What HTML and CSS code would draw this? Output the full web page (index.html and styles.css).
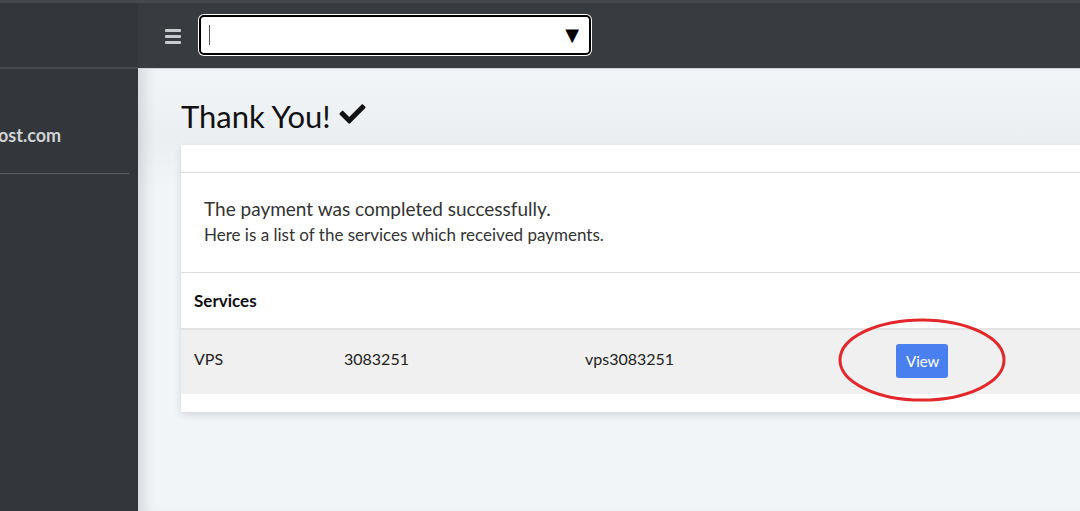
FILE: index.html
```html
<!DOCTYPE html>
<html lang="en">
<head>
  <meta charset="UTF-8" />
  <title>Thank You</title>
  <link rel="stylesheet" href="styles.css">
</head>
<body>
  <div class="layout">
    <aside class="sidebar">
      <div class="brand"></div>
      <div class="account">ost.com</div>
      <hr class="side-rule">
    </aside>

    <div class="page">
      <header class="topbar">
        <span class="burger"><i></i><i></i><i></i></span>
        <div class="picker">
          <span class="caret"></span>
          <span class="arrow">&#9660;</span>
        </div>
      </header>

      <main class="content">
        <h1 class="title">Thank You! <svg class="check" viewBox="0 0 512 512" width="31" height="26"><path d="M173.9 439.4l-166.4-166.4c-10-10-10-26.2 0-36.2l36.2-36.2c10-10 26.2-10 36.2 0L192 312.7 432.1 72.6c10-10 26.2-10 36.2 0l36.2 36.2c10 10 10 26.2 0 36.2l-294.4 294.4c-10 10-26.2 10-36.2 0z"/></svg></h1>

        <div class="card">
          <div class="card-head"></div>
          <div class="card-body">
            <p class="lead">The payment was completed successfully.</p>
            <p class="sub">Here is a list of the services which received payments.</p>
          </div>
          <table class="services">
            <thead>
              <tr><th colspan="4">Services</th></tr>
            </thead>
            <tbody>
              <tr>
                <td class="c-type">VPS</td>
                <td class="c-id">3083251</td>
                <td class="c-name">vps3083251</td>
                <td class="c-act">
                  <span class="mark">
                    <button class="btn-view">View</button>
                    <svg class="ring" viewBox="0 0 170 86" width="170" height="86"><ellipse cx="85" cy="43" rx="82" ry="40" fill="none" stroke="#e3282c" stroke-width="3"/></svg>
                  </span>
                </td>
              </tr>
            </tbody>
          </table>
          <div class="card-foot"></div>
        </div>
      </main>
    </div>
  </div>
</body>
</html>
```

FILE: styles.css
```css
html, body {
  margin: 0;
  height: 100%;
  overflow: hidden;
}
body {
  font-family: 'Lato', 'Open Sans', sans-serif;
  background: #f2f5f8;
  color: #222;
}
.layout {
  display: flex;
  height: 100%;
}
.sidebar {
  width: 138px;
  flex: none;
  background: #33373c;
  border-top: 3px solid #45494e;
  box-sizing: border-box;
}
.brand {
  height: 64px;
  border-bottom: 2px solid #464a4f;
}
.account {
  color: #d0d2d4;
  font-weight: bold;
  font-size: 18px;
  padding-top: 55px;
  height: 49px;
  margin-left: -2px;
  white-space: nowrap;
  overflow: hidden;
}
.side-rule {
  border: 0;
  border-top: 1px solid #5a5e63;
  margin: 0 9px 0 0;
}
.page {
  flex: 1;
  display: flex;
  flex-direction: column;
  min-width: 0;
}
.topbar {
  height: 65px;
  background: #383b40;
  border-top: 3px solid #45494e;
  border-bottom: 1px solid #cfd3d7;
  display: flex;
  align-items: center;
  padding-left: 27px;
  gap: 18px;
  flex: none;
}
.burger {
  display: flex;
  flex-direction: column;
  gap: 3px;
  width: 16px;
  margin-top: 2px;
}
.burger i {
  display: block;
  height: 3px;
  background: #c9cbcd;
  border-radius: 1px;
}
.picker {
  width: 370px;
  height: 36px;
  background: #fff;
  border: 2px solid #000;
  border-radius: 5px;
  box-shadow: 0 0 0 1px #fff;
  display: flex;
  align-items: center;
  justify-content: space-between;
  padding: 0 10px 0 8px;
  box-sizing: content-box;
  margin-top: -2px;
}
.caret {
  width: 1px;
  height: 20px;
  background: #555;
}
.arrow {
  font-size: 18px;
  color: #000;
  font-family: 'DejaVu Sans', sans-serif;
}
.content {
  flex: 1;
  padding: 0 0 0 43px;
  box-shadow: inset 14px 0 14px -8px rgba(0, 0, 0, 0.12);
  background: linear-gradient(#f2f5f8, #eceff2 70px, #f2f5f8 120px);
}
.title {
  font-weight: normal;
  font-size: 31px;
  margin: 28px 0 10px;
  display: flex;
  align-items: center;
  gap: 6px;
  line-height: 38px;
  color: #111;
}
.check {
  fill: #111;
  margin-top: -4px;
}
.card {
  width: 960px;
  background: #fff;
  box-shadow: 0 3px 8px rgba(0, 0, 0, 0.12);
}
.card-head {
  height: 27px;
  border-bottom: 1px solid #dcdcdc;
}
.card-body {
  padding: 23px 23px 24px;
  border-bottom: 1px solid #dcdcdc;
  color: #333;
}
.lead {
  margin: 0;
  font-size: 19px;
  line-height: 26px;
}
.sub {
  margin: 0;
  font-size: 17px;
  line-height: 26px;
}
.services {
  width: 100%;
  border-collapse: collapse;
  font-size: 16px;
}
.services th {
  text-align: left;
  font-weight: bold;
  padding: 0 13px;
  height: 55px;
  border-bottom: 2px solid #e3e3e3;
  color: #111;
  font-size: 17px;
}
.services td {
  background: #f0f0f0;
  height: 56px;
  padding: 0 13px 8px;
  color: #222;
}
.services td.c-act {
  padding-bottom: 2px;
}
.c-type { width: 124px; }
.c-id { width: 215px; }
.c-name { width: 285px; }
.mark {
  position: relative;
  display: inline-block;
}
.btn-view {
  background: #4a7ff0;
  color: #fff;
  border: 0;
  border-radius: 3px;
  font: 15px 'Lato', sans-serif;
  padding: 8px 10px;
  width: 52px;
  height: 34px;
}
.ring {
  position: absolute;
  left: -59px;
  top: -27px;
}
.card-foot {
  height: 18px;
}
```
